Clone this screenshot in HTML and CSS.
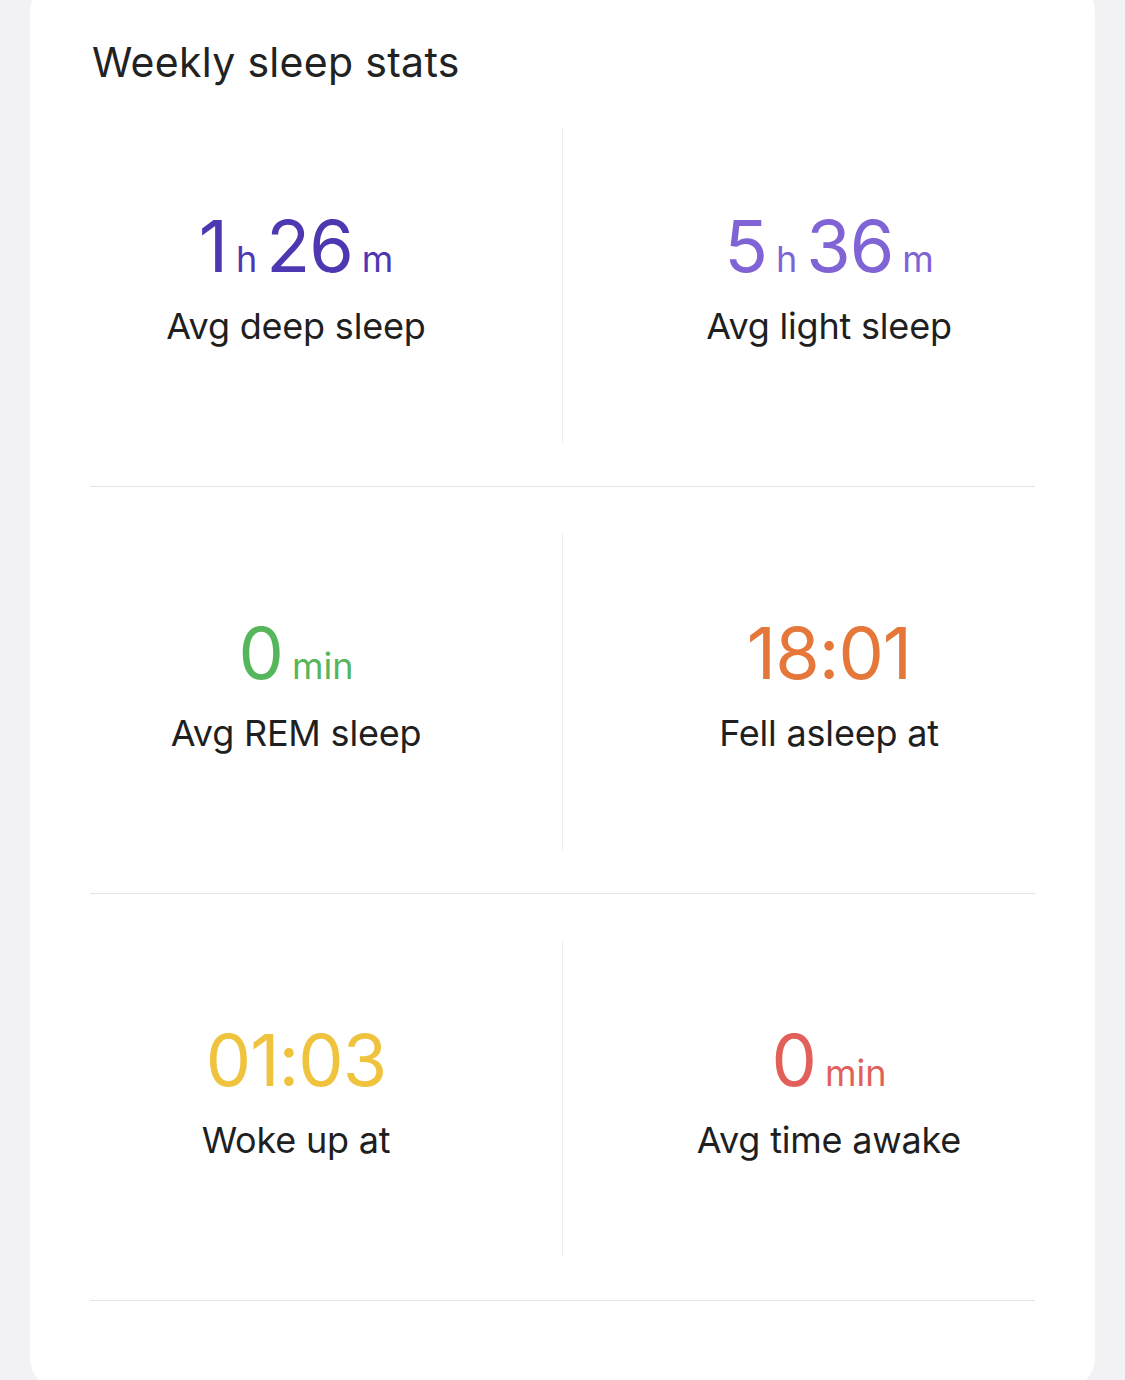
FILE: index.html
```html
<!DOCTYPE html>
<html lang="en">
<head>
<meta charset="utf-8">
<title>Weekly sleep stats</title>
<link rel="stylesheet" href="styles.css">
</head>
<body>
<div class="page">
  <section class="card">
    <h2 class="title">Weekly sleep stats</h2>

    <div class="row">
      <div class="cell">
        <div class="value deep"><span class="num">1</span><span class="unit">h</span><span class="num">26</span><span class="unit">m</span></div>
        <div class="label">Avg deep sleep</div>
      </div>
      <div class="vdiv"></div>
      <div class="cell">
        <div class="value light"><span class="num">5</span><span class="unit">h</span><span class="num">36</span><span class="unit">m</span></div>
        <div class="label">Avg light sleep</div>
      </div>
    </div>
    <div class="hdiv"></div>

    <div class="row">
      <div class="cell">
        <div class="value rem"><span class="num">0</span><span class="unit">min</span></div>
        <div class="label">Avg REM sleep</div>
      </div>
      <div class="vdiv"></div>
      <div class="cell">
        <div class="value asleep"><span class="num">18:01</span></div>
        <div class="label">Fell asleep at</div>
      </div>
    </div>
    <div class="hdiv"></div>

    <div class="row">
      <div class="cell">
        <div class="value woke"><span class="num">01:03</span></div>
        <div class="label">Woke up at</div>
      </div>
      <div class="vdiv"></div>
      <div class="cell">
        <div class="value awake"><span class="num">0</span><span class="unit">min</span></div>
        <div class="label">Avg time awake</div>
      </div>
    </div>
    <div class="hdiv"></div>
  </section>
</div>
</body>
</html>
```

FILE: styles.css
```css
* { box-sizing: border-box; }

html, body {
  margin: 0;
  padding: 0;
  background: #f2f2f4;
  font-family: Inter, "Noto Sans", "Liberation Sans", sans-serif;
  color: #1f1f1f;
}

.page {
  width: 1125px;
  height: 1380px;
  overflow: hidden;
  padding-left: 30px;
}

.card {
  width: 1065px;
  margin-top: -20px;
  height: 1410px;
  background: #ffffff;
  border-radius: 32px;
}

.title {
  margin: 0;
  height: 100px;
  padding: 58px 0 0 62px;
  font-size: 41px;
  line-height: 48px;
  font-weight: 400;
  color: #222222;
  letter-spacing: 0.3px;
}

.row {
  display: grid;
  grid-template-columns: 1fr 1px 1fr;
  height: 406px;
}

.cell {
  display: flex;
  flex-direction: column;
  align-items: center;
  padding-top: 126px;
}

.vdiv {
  background: #ececee;
  margin: 47px 0 43px;
}

.hdiv {
  height: 1px;
  margin: 0 60px;
  background: #e4e4e6;
}

.value {
  display: flex;
  align-items: baseline;
  gap: 9px;
  height: 80px;
  line-height: 80px;
}

.num {
  font-size: 72px;
  font-weight: 400;
  letter-spacing: -1px;
}

.unit {
  font-size: 36px;
  line-height: 36px;
  font-weight: 400;
}

.label {
  margin-top: 18px;
  font-size: 36px;
  line-height: 44px;
  color: #1f1f1f;
  letter-spacing: -0.2px;
}

.deep { color: #4f37b2; }
.light { color: #8064d6; }
.rem { color: #55b65c; }
.asleep { color: #e5773a; }
.woke { color: #f0c33f; }
.awake { color: #e2605a; }
```
